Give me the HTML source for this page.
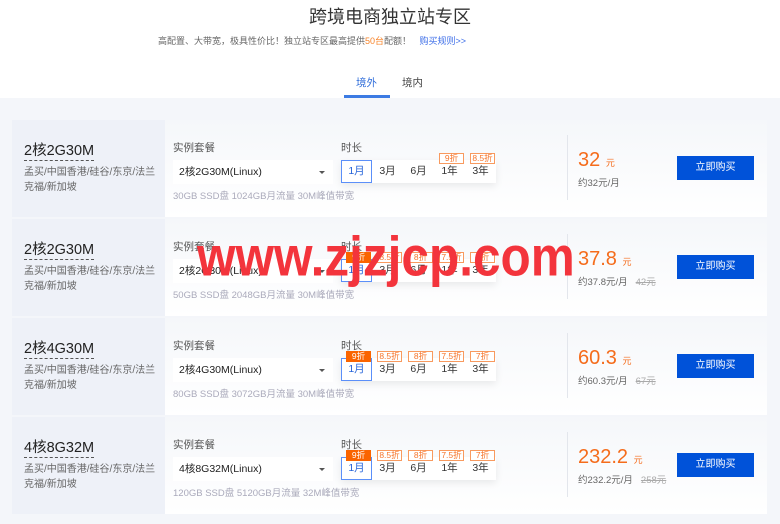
<!DOCTYPE html>
<html><head><meta charset="utf-8"><style>
*{margin:0;padding:0;box-sizing:border-box}
body{width:780px;height:524px;overflow:hidden;background:#f4f6fa;font-family:"Liberation Sans","Noto Sans CJK SC",sans-serif;position:relative;color:#333}
.top{position:absolute;left:0;top:0;width:780px;height:98px;background:#fff}
.a{position:absolute;white-space:nowrap}
.card{position:absolute;left:12px;width:755px;height:97px;background:linear-gradient(#f5f7fa,#fff)}
.left{position:absolute;left:0;top:0;width:153px;height:97px;background:#eef1f8}
.t{position:absolute;left:12px;top:22px;font-size:14.5px;color:#222;border-bottom:1px dashed #555;line-height:18px}
.loc{position:absolute;left:12px;top:45px;font-size:10px;color:#666;line-height:15px;width:134px}
.lb{position:absolute;font-size:10.5px;color:#555;top:20px}
.sel{position:absolute;left:161px;top:40px;width:160px;height:24px;background:#fff;font-size:10.5px;line-height:24px;padding-left:6px;color:#222}
.sel:after{content:"";position:absolute;right:8px;top:11px;border:3px solid transparent;border-top:3px solid #555}
.spec{position:absolute;left:161px;top:68px;font-size:9.5px;color:#aab}
.dur{position:absolute;left:329px;top:40px;width:155px;height:23px;background:#fff;box-shadow:0 3px 8px rgba(0,0,0,.08)}
.d{position:absolute;top:0;width:31px;height:23px;font-size:10.5px;text-align:center;line-height:23px;color:#333}
.d.on{border:1px solid #5b8ff9;color:#2563d9;line-height:21px;background:#fff}
.tag{position:absolute;top:33px;width:25px;height:11px;border:1px solid #f89a5f;color:#f6752b;font-size:8.5px;line-height:9px;text-align:center;background:#fff}
.tag.f{background:#fa6400;color:#fff;border-color:#fa6400}
.div{position:absolute;left:555px;top:15px;width:1px;height:65px;background:#e3e6ec}
.pr{position:absolute;left:566px;top:29px;font-size:20px;color:#f56c1b}
.pr small{font-size:9px}
.sub{position:absolute;left:566px;top:55px;font-size:9.5px;color:#666}
.sub s{color:#aaa;margin-left:8px}
.btn{position:absolute;left:665px;top:36px;width:77px;height:24px;background:#0052d9;color:#fff;font-size:10px;text-align:center;line-height:24px}
.wm{position:absolute;left:197px;top:224px;font-size:49.5px;font-weight:bold;color:#f3343c;transform:scaleY(1.12);transform-origin:top left;line-height:60px}
</style></head><body>
<div class="top"></div>
<div class="a" style="left:0;width:780px;text-align:center;top:3px;font-size:18px;color:#333">跨境电商独立站专区</div>
<div class="a" style="left:158px;top:34px;font-size:9px;color:#666">高配置、大带宽，极具性价比！独立站专区最高提供<span style="color:#f7842a">50台</span>配额！ <span style="color:#3d6ee8;margin-left:6px">购买规则&gt;&gt;</span></div>
<div class="a" style="left:356px;top:75px;font-size:10.5px;color:#2b6ad9">境外</div>
<div class="a" style="left:402px;top:75px;font-size:10.5px;color:#444">境内</div>
<div class="a" style="left:344px;top:95px;width:46px;height:3px;background:#3c7be3"></div>

<div class="card" style="top:120px"><div class="left"></div><div class="t">2核2G30M</div><div class="loc">孟买/中国香港/硅谷/东京/法兰克福/新加坡</div>
<div class="lb" style="left:161px">实例套餐</div><div class="sel">2核2G30M(Linux)</div><div class="spec">30GB SSD盘 1024GB月流量 30M峰值带宽</div>
<div class="lb" style="left:329px">时长</div><div class="dur"><div class="d on" style="left:0">1月</div><div class="d" style="left:31px">3月</div><div class="d" style="left:62px">6月</div><div class="d" style="left:93px">1年</div><div class="d" style="left:124px">3年</div></div>
<div class="tag" style="left:427px">9折</div><div class="tag" style="left:458px">8.5折</div>
<div class="div"></div><div class="pr">32 <small>元</small></div><div class="sub">约32元/月</div><div class="btn">立即购买</div></div>

<div class="card" style="top:219px"><div class="left"></div><div class="t">2核2G30M</div><div class="loc">孟买/中国香港/硅谷/东京/法兰克福/新加坡</div>
<div class="lb" style="left:161px">实例套餐</div><div class="sel">2核2G30M(Linux)</div><div class="spec">50GB SSD盘 2048GB月流量 30M峰值带宽</div>
<div class="lb" style="left:329px">时长</div><div class="dur"><div class="d on" style="left:0">1月</div><div class="d" style="left:31px">3月</div><div class="d" style="left:62px">6月</div><div class="d" style="left:93px">1年</div><div class="d" style="left:124px">3年</div></div>
<div class="tag f" style="left:334px">9折</div><div class="tag" style="left:365px">8.5折</div><div class="tag" style="left:396px">8折</div><div class="tag" style="left:427px">7.5折</div><div class="tag" style="left:458px">7折</div>
<div class="div"></div><div class="pr">37.8 <small>元</small></div><div class="sub">约37.8元/月<s>42元</s></div><div class="btn">立即购买</div></div>

<div class="card" style="top:318px"><div class="left"></div><div class="t">2核4G30M</div><div class="loc">孟买/中国香港/硅谷/东京/法兰克福/新加坡</div>
<div class="lb" style="left:161px">实例套餐</div><div class="sel">2核4G30M(Linux)</div><div class="spec">80GB SSD盘 3072GB月流量 30M峰值带宽</div>
<div class="lb" style="left:329px">时长</div><div class="dur"><div class="d on" style="left:0">1月</div><div class="d" style="left:31px">3月</div><div class="d" style="left:62px">6月</div><div class="d" style="left:93px">1年</div><div class="d" style="left:124px">3年</div></div>
<div class="tag f" style="left:334px">9折</div><div class="tag" style="left:365px">8.5折</div><div class="tag" style="left:396px">8折</div><div class="tag" style="left:427px">7.5折</div><div class="tag" style="left:458px">7折</div>
<div class="div"></div><div class="pr">60.3 <small>元</small></div><div class="sub">约60.3元/月<s>67元</s></div><div class="btn">立即购买</div></div>

<div class="card" style="top:417px"><div class="left"></div><div class="t">4核8G32M</div><div class="loc">孟买/中国香港/硅谷/东京/法兰克福/新加坡</div>
<div class="lb" style="left:161px">实例套餐</div><div class="sel">4核8G32M(Linux)</div><div class="spec">120GB SSD盘 5120GB月流量 32M峰值带宽</div>
<div class="lb" style="left:329px">时长</div><div class="dur"><div class="d on" style="left:0">1月</div><div class="d" style="left:31px">3月</div><div class="d" style="left:62px">6月</div><div class="d" style="left:93px">1年</div><div class="d" style="left:124px">3年</div></div>
<div class="tag f" style="left:334px">9折</div><div class="tag" style="left:365px">8.5折</div><div class="tag" style="left:396px">8折</div><div class="tag" style="left:427px">7.5折</div><div class="tag" style="left:458px">7折</div>
<div class="div"></div><div class="pr">232.2 <small>元</small></div><div class="sub">约232.2元/月<s>258元</s></div><div class="btn">立即购买</div></div>

<div class="wm">www.zjzjcp.com</div>
</body></html>
